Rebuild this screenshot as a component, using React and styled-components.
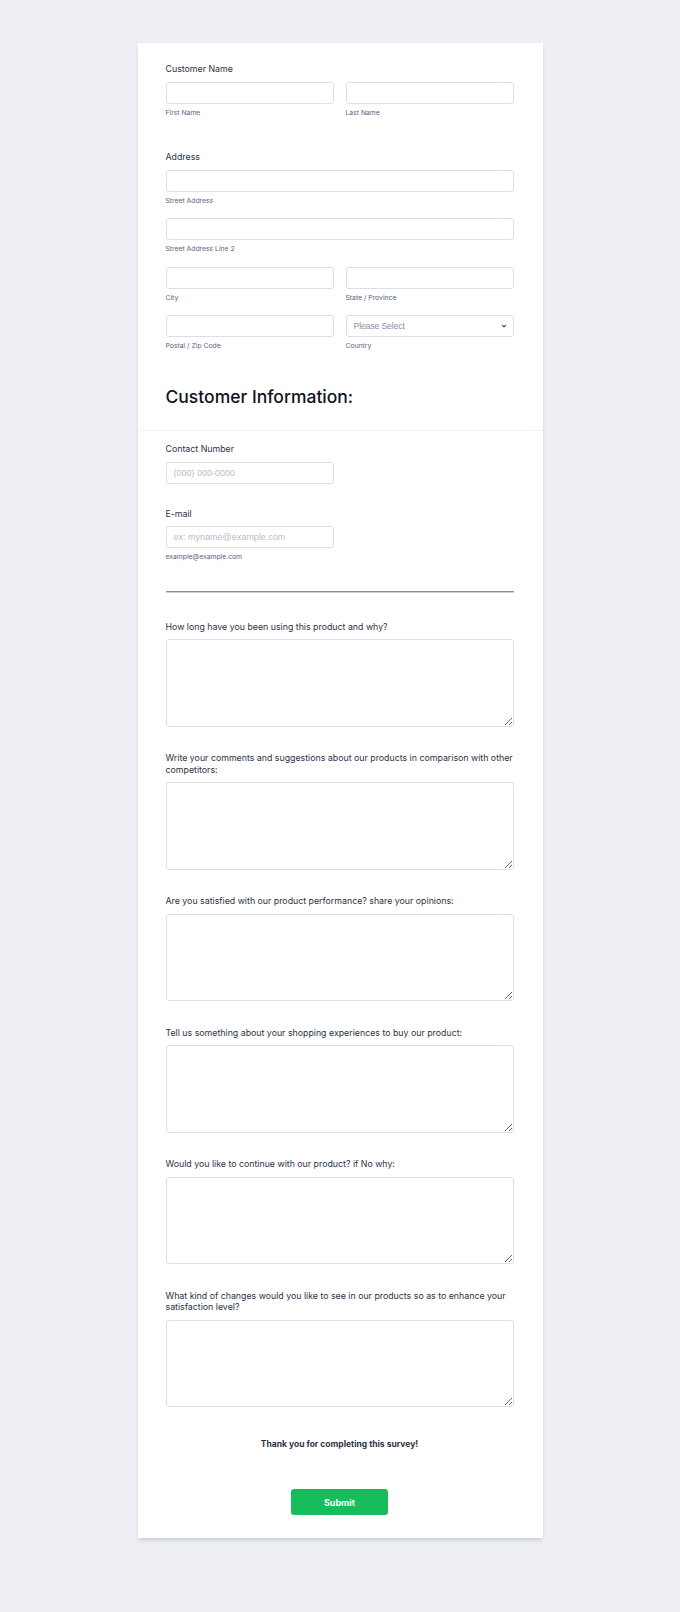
import styled, { createGlobalStyle } from "styled-components";

const GlobalStyle = createGlobalStyle`
  * { box-sizing: border-box; }
  body {
    margin: 0;
    background: #eceef3;
    font-family: Inter, "Noto Sans", sans-serif;
    color: #2c3345;
  }
`;

const Page = styled.div`
  padding: 43px 0 74px;
`;

const Card = styled.form`
  width: 405px;
  margin: 0 auto;
  background: #fff;
  box-shadow: 0 3px 4px -1px rgba(42, 56, 90, 0.18);
  display: flex;
  flex-direction: column;
`;

const Section = styled.div`
  padding: ${(p) => p.$top || 0}px 29px ${(p) => p.$bottom || 0}px 28px;
  display: flex;
  flex-direction: column;
`;

const Field = styled.div`
  display: flex;
  flex-direction: column;
  margin-top: ${(p) => p.$mt || 0}px;
`;

const Label = styled.label`
  font-size: 8.8px;
  line-height: 11.5px;
  color: #2c3345;
  margin-bottom: 7px;
`;

const Row = styled.div`
  display: flex;
  gap: 12px;
  & + & {
    margin-top: 13.5px;
  }
`;

const Col = styled.div`
  flex: 1;
  display: flex;
  flex-direction: column;
`;

const Input = styled.input`
  display: block;
  margin: 0;
  height: 22px;
  width: ${(p) => (p.$half ? "calc((100% - 12px) / 2)" : "100%")};
  border: 1px solid #dcdfe8;
  border-radius: 3px;
  padding: 0 7px;
  font-family: "Liberation Sans", Arial, sans-serif;
  font-size: 9px;
  color: #2c3345;
  outline: none;
  &::placeholder {
    color: #b6bccb;
  }
`;

const SelectWrap = styled.div`
  position: relative;
  height: 22px;
`;

const Select = styled.select`
  display: block;
  margin: 0;
  appearance: none;
  width: 100%;
  height: 22px;
  border: 1px solid #dcdfe8;
  border-radius: 3px;
  background: #fff;
  padding: 0 7px;
  font-family: "Liberation Sans", Arial, sans-serif;
  font-size: 8.8px;
  letter-spacing: -0.2px;
  color: #8991a8;
  outline: none;
`;

const Chevron = styled.svg`
  position: absolute;
  right: 7px;
  top: 9px;
  width: 6px;
  height: 4px;
  pointer-events: none;
`;

const Sub = styled.span`
  font-size: 6.8px;
  line-height: 9px;
  margin-top: 4px;
  color: #57647e;
`;

const HeadingBlock = styled.div`
  padding: 35.75px 29px 22px 28px;
  border-bottom: 1px solid #eef0f5;
`;

const Heading = styled.h2`
  margin: 0;
  font-size: 17.5px;
  line-height: 22px;
  font-weight: 500;
  color: #0f1322;
`;

const Divider = styled.div`
  height: 2px;
  margin-top: 29.75px;
  border-top: 1px solid #8e8e8e;
  border-bottom: 1px solid #cfcfcf;
`;

const TextArea = styled.textarea`
  display: block;
  margin: 0;
  height: 87.5px;
  width: 100%;
  border: 1px solid #dcdfe8;
  border-radius: 3px;
  resize: vertical;
  outline: none;
  font-family: Inter, sans-serif;
`;

const Thanks = styled.p`
  margin: 32px 0 0;
  text-align: center;
  font-size: 8.5px;
  line-height: 11px;
  font-weight: 700;
  color: #2c3345;
`;

const Submit = styled.button`
  align-self: center;
  margin-top: 39px;
  width: 97px;
  height: 26px;
  border: none;
  border-radius: 3px;
  background: #18bd5b;
  color: #fff;
  font-family: Inter, sans-serif;
  font-size: 9px;
  font-weight: 700;
`;

const questions = [
  "How long have you been using this product and why?",
  "Write your comments and suggestions about our products in comparison with other competitors:",
  "Are you satisfied with our product performance? share your opinions:",
  "Tell us something about your shopping experiences to buy our product:",
  "Would you like to continue with our product? if No why:",
  "What kind of changes would you like to see in our products so as to enhance your satisfaction level?",
];

const Pair = ({ left, right, select }) => (
  <Row>
    <Col>
      <Input />
      <Sub>{left}</Sub>
    </Col>
    <Col>
      {select ? (
        <SelectWrap>
          <Select defaultValue="">
            <option value="">Please Select</option>
          </Select>
          <Chevron viewBox="0 0 10 7">
            <path d="M1.5 1.5l3.5 3.5 3.5-3.5" fill="none" stroke="#3a4154" strokeWidth="1.8" />
          </Chevron>
        </SelectWrap>
      ) : (
        <Input />
      )}
      <Sub>{right}</Sub>
    </Col>
  </Row>
);

const App = () => {
  return (
    <Page>
      <GlobalStyle />
      <Card onSubmit={(e) => e.preventDefault()}>
        <Section $top={20}>
          <Field>
            <Label>Customer Name</Label>
            <Pair left="First Name" right="Last Name" />
          </Field>
          <Field $mt={34.5}>
            <Label>Address</Label>
            <Row>
              <Col>
                <Input />
                <Sub>Street Address</Sub>
              </Col>
            </Row>
            <Row>
              <Col>
                <Input />
                <Sub>Street Address Line 2</Sub>
              </Col>
            </Row>
            <Pair left="City" right="State / Province" />
            <Pair left="Postal / Zip Code" right="Country" select />
          </Field>
        </Section>
        <HeadingBlock>
          <Heading>Customer Information:</Heading>
        </HeadingBlock>
        <Section $top={12.25} $bottom={23}>
          <Field>
            <Label>Contact Number</Label>
            <Input $half placeholder="(000) 000-0000" />
          </Field>
          <Field $mt={24}>
            <Label>E-mail</Label>
            <Input $half placeholder="ex: myname@example.com" />
            <Sub>example@example.com</Sub>
          </Field>
          <Divider />
          {questions.map((q, i) => (
            <Field key={i} $mt={i === 0 ? 28 : 25.5}>
              <Label>{q}</Label>
              <TextArea />
            </Field>
          ))}
          <Thanks>Thank you for completing this survey!</Thanks>
          <Submit type="submit">Submit</Submit>
        </Section>
      </Card>
    </Page>
  );
};

export default App;
